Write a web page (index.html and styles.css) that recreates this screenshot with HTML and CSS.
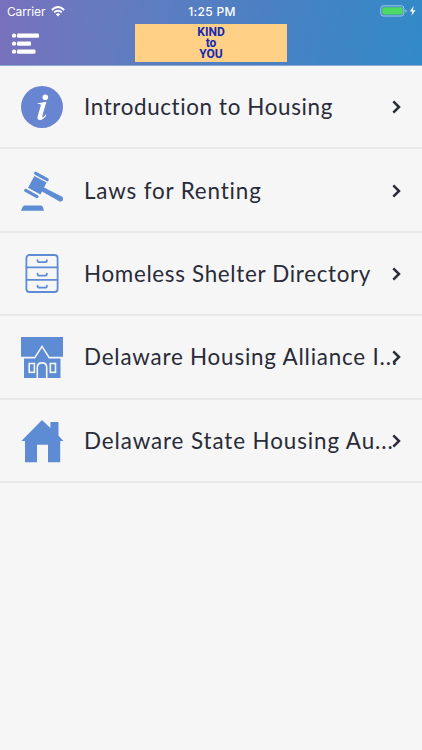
FILE: index.html
```html
<!DOCTYPE html>
<html lang="en">
<head>
<meta charset="UTF-8">
<meta name="viewport" content="width=device-width, initial-scale=1.0">
<title>Kind to You</title>
<link rel="stylesheet" href="styles.css">
</head>
<body>

<header class="header">
  <div class="status">
    <div class="carrier">
      <span>Carrier</span>
      <svg width="14" height="11" viewBox="0 0 14 11" fill="none" stroke="#fff" stroke-width="1.9">
        <path d="M.8 4Q7-1.8 13.2 4M3.1 6.4Q7 2.9 10.9 6.4"/>
        <path d="M4.8 8.2Q7 6.4 9.2 8.2L7 10.6z" fill="#fff" stroke="none"/>
      </svg>
    </div>
    <div class="time">1:25 PM</div>
    <div class="battery">
      <svg width="37" height="12" viewBox="0 0 37 12">
        <rect x=".8" y=".8" width="23" height="10.2" rx="2.5" fill="none" stroke="#a9c8e7"/>
        <rect x="2.3" y="2.3" width="20.4" height="7.2" rx="1.2" fill="#4cd964"/>
        <path d="M25.3 4.2q1.4.5 1.4 1.7t-1.4 1.7z" fill="#a9c8e7"/>
        <path d="M33.7 1L29.7 6.5H32.3L31.4 10.8L35.5 5.3H32.8z" fill="#fff"/>
      </svg>
    </div>
  </div>
  <div class="navbar">
    <svg class="menu" width="28" height="22" viewBox="0 0 28 22" fill="#fff">
      <circle cx="2" cy="2.6" r="2.2"/>
      <circle cx="2" cy="10.6" r="2.2"/>
      <circle cx="2" cy="18.6" r="2.2"/>
      <rect x="5" y=".4" width="22" height="4.4" rx="1.3"/>
      <rect x="5" y="8.4" width="14" height="4.4" rx="1.3"/>
      <rect x="5" y="16.4" width="18.5" height="4.4" rx="1.3"/>
    </svg>
    <div class="logo">KIND<br>to<br>YOU</div>
  </div>
</header>

<main class="list">
  <div class="row">
    <svg class="icon info" viewBox="0 0 42 42">
      <circle cx="21" cy="21" r="21"/>
      <circle class="light" cx="24.3" cy="11.3" r="2.8"/>
      <path class="light" d="M16.8 17.2Q21.5 16.8 25.4 15.8L21.4 29.5Q20.9 31.5 22 31.2Q23.2 30.7 24.5 28.6L25.3 29.2Q22.4 34 18.9 34Q15.7 33.8 16.7 30L19.7 20Q20.3 18.1 18.8 18.1H16.6z"/>
    </svg>
    <span class="label intro">Introduction to Housing</span>
    <svg class="arrow" viewBox="0 0 9 14"><path d="M1.3 1.3L7 7L1.3 12.7"/></svg>
  </div>
  <div class="row">
    <svg class="icon" viewBox="0 0 42 42">
      <path d="M13.4 6L25.6 12.5L19.5 24.5L7 17.7z"/>
      <path class="thick" d="M14.7 3.3L26.2 9.7M4.7 20.4L16 26.6"/>
      <path d="M22 17L41.2 26.8Q42.7 28.5 41.7 30.5Q40.3 32.2 38.2 31.2L20.2 21z"/>
      <path d="M3.7 35.5H20Q21.4 35.5 21.8 37L23 40.8H0L1.6 37Q2.1 35.5 3.7 35.5z"/>
    </svg>
    <span class="label laws">Laws for Renting</span>
    <svg class="arrow" viewBox="0 0 9 14"><path d="M1.3 1.3L7 7L1.3 12.7"/></svg>
  </div>
  <div class="row">
    <svg class="icon" viewBox="0 0 42 42">
      <g class="line">
        <rect x="5.4" y="2" width="31.2" height="37" rx="3"/>
        <path d="M5.4 14.4H36.6M5.4 26.9H36.6"/>
        <path d="M16.5 7.2Q16.5 9.1 18.2 9.1H24.2Q25.9 9.1 25.9 7.2M16.5 20.7Q16.5 22.6 18.2 22.6H24.2Q25.9 22.6 25.9 20.7M16.5 32.7Q16.5 34.6 18.2 34.6H24.2Q25.9 34.6 25.9 32.7"/>
      </g>
    </svg>
    <span class="label shelter">Homeless Shelter Directory</span>
    <svg class="arrow" viewBox="0 0 9 14"><path d="M1.3 1.3L7 7L1.3 12.7"/></svg>
  </div>
  <div class="row">
    <svg class="icon" viewBox="0 0 42 42">
      <path d="M0 1H42V20.8H28.5L21 9L13.5 20.8H0z"/>
      <path d="M3 22.5H14.2L21 11.7L27.8 22.5H39.5V42H3z"/>
      <g class="cutout">
        <rect x="8.2" y="27.5" width="5.2" height="8.8"/>
        <rect x="29.3" y="27.5" width="5.2" height="8.8"/>
        <path d="M16.3 42V31.5Q16.3 26.9 21 26.9T25.7 31.5V42"/>
      </g>
    </svg>
    <span class="label alliance">Delaware Housing Alliance I...</span>
    <svg class="arrow" viewBox="0 0 9 14"><path d="M1.3 1.3L7 7L1.3 12.7"/></svg>
  </div>
  <div class="row">
    <svg class="icon" viewBox="0 0 42 42">
      <path d="M21 0L29.4 8V2H37.5V15.7L42.5 21H39.2V42.2H27V24.7H16V42.2H4V21H.3z"/>
    </svg>
    <span class="label state">Delaware State Housing Au...</span>
    <svg class="arrow" viewBox="0 0 9 14"><path d="M1.3 1.3L7 7L1.3 12.7"/></svg>
  </div>
</main>

</body>
</html>
```
FILE: styles.css
```css
body {
  margin: 0;
  height: 750px;
  overflow: hidden;
  background-color: #f6f6f6;
  font-family: Lato, sans-serif;
}
.header {
  box-sizing: border-box;
  height: 66px;
  background: linear-gradient(100deg, #7870bd 0%, #687abf 22%, #4b80c3 60%, #328ac8 100%);
  border-bottom: 1px solid #8da8d3;
  color: #fff;
}
.status {
  display: grid;
  grid-template-columns: 1fr auto 1fr;
  align-items: center;
  height: 22px;
  padding: 0 5px 0 7px;
  font-family: Inter, sans-serif;
  font-size: 12px;
}
.carrier {
  display: flex;
  align-items: center;
  gap: 6px;
}
.carrier span {
  width: 38px;
  white-space: nowrap;
  letter-spacing: -0.15px;
}
.time {
  font-weight: 500;
  letter-spacing: 0.3px;
}
.battery {
  display: flex;
  justify-content: flex-end;
}
.navbar {
  display: grid;
  grid-template-columns: 123px 152px;
  align-items: start;
  padding: 2px 0 0 12px;
}
.menu {
  margin-top: 8.5px;
}
.logo {
  height: 38px;
  box-sizing: border-box;
  padding-top: 3px;
  background-color: #ffd085;
  color: #1229b5;
  font: bold 12px/11px Roboto, sans-serif;
  text-align: center;
}
.row {
  display: flex;
  align-items: center;
  box-sizing: border-box;
  height: 83.4px;
  padding: 1px 21px 0;
  border-bottom: 2px solid #e9e9e9;
}
.icon {
  flex: none;
  width: 42px;
  height: 42px;
  overflow: visible;
  fill: #5d8cd5;
}
.info {
  fill: #6885d2;
}
.light {
  fill: #fff;
}
.line {
  fill: none;
  stroke: #5d8cd5;
  stroke-width: 1.8;
  stroke-linecap: round;
}
.thick {
  stroke: #5d8cd5;
  stroke-width: 3.2;
  stroke-linecap: round;
}
.cutout {
  fill: none;
  stroke: #f6f6f6;
  stroke-width: 1.6;
}
.label {
  flex: 1;
  min-width: 0;
  margin-left: 21px;
  color: #292b38;
  font-size: 22.4px;
  line-height: 30px;
  white-space: nowrap;
}
.intro {
  letter-spacing: 0.63px;
}
.laws {
  letter-spacing: 0.85px;
}
.shelter {
  letter-spacing: 0.68px;
}
.alliance {
  letter-spacing: 0.8px;
}
.state {
  letter-spacing: 0.9px;
}
.arrow {
  flex: none;
  width: 9px;
  height: 14px;
  fill: none;
  stroke: #292b38;
  stroke-width: 2.5;
}
```
